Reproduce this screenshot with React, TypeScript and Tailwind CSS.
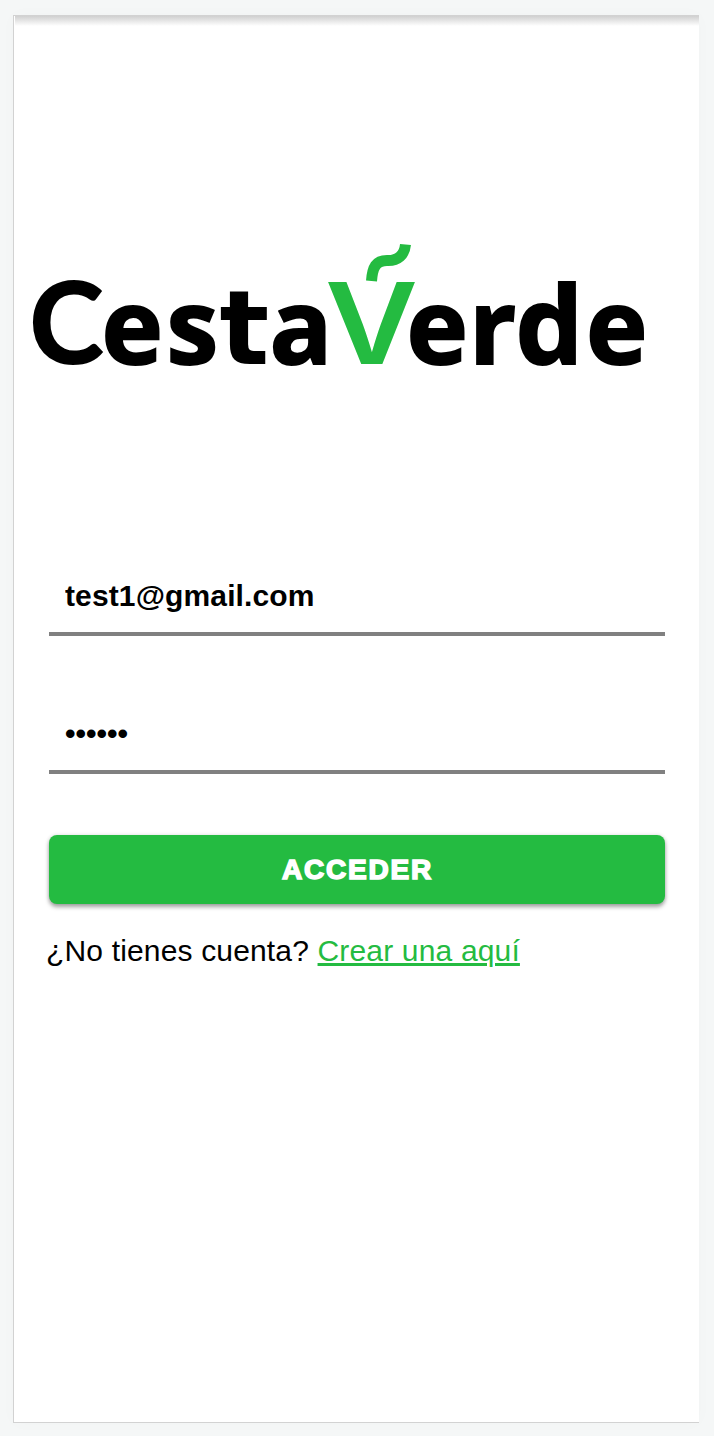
function Logo() {
  return (
    <svg className="block h-[200px] w-[640px]" viewBox="20 205 640 200" role="img" aria-label="CestaVerde">
      <text
        y="364"
        className="fill-black font-['Open_Sans',sans-serif] text-[104px] font-bold"
        x="29 101.500 166.500 219.500 269.500"
      >
        <tspan className="font-['Lato',sans-serif] text-[114px] font-black">C</tspan>
        <tspan className="stroke-black stroke-[2px]">es</tspan>
        <tspan className="font-['DejaVu_Sans',sans-serif] text-[104px]">t</tspan>
        <tspan className="stroke-black stroke-[2px]">a</tspan>
      </text>
      <text
        y="364"
        x="325"
        textLength="93"
        lengthAdjust="spacingAndGlyphs"
        className="fill-[#24bb41] font-['Inter',sans-serif] text-[113px] font-semibold"
      >
        V
      </text>
      <text
        y="364"
        className="fill-black stroke-black stroke-[2px] font-['Open_Sans',sans-serif] text-[104px] font-bold"
        x="406.500 469 515.500 586"
      >
        er<tspan className="text-[107px]">d</tspan>e
      </text>
      <path
        d="M371.500 281C372.500 267 376 260.500 387 260.500C398 261 404.500 255 405.500 244.500"
        fill="none"
        stroke="#24bb41"
        strokeWidth="11"
      />
    </svg>
  );
}

export default function App() {
  return (
    <div className="h-[1436px] w-[714px] bg-[#f5f7f7] pt-[15px] pl-[13px] font-['Liberation_Sans',Arial,sans-serif] text-black">
      <main className="flex h-[1408px] w-[686px] flex-col border-t border-b border-l border-[#d2d2d2] bg-white shadow-[0_0_16px_rgba(0,0,0,0.02)]">
        <div className="ml-px h-[10px] shrink-0 bg-linear-to-b from-[#d0d0d0] to-white" />
        <div className="mt-[179px] ml-[6px] shrink-0">
          <Logo />
        </div>
        <form className="mt-[152px] ml-[35px] flex w-[616px] flex-col">
          <input
            type="text"
            aria-label="Email"
            defaultValue="test1@gmail.com"
            className="h-[79px] border-b-4 border-[#808080] px-4 pt-[2px] text-[30px] font-bold tracking-[0.130px] outline-none"
          />
          <input
            type="password"
            aria-label="Password"
            defaultValue="123456"
            className="mt-[59px] h-[79px] border-b-4 border-[#808080] px-4 pt-[2px] text-[30px] font-bold outline-none"
          />
          <button
            type="button"
            className="mt-[61px] h-[69px] rounded-lg bg-[#24bb41] pt-px pl-px text-[28px] font-bold tracking-[1.800px] text-white shadow-[0_3px_4px_rgba(0,0,0,0.35),0_0_4px_rgba(0,0,0,0.12)] [-webkit-text-stroke:1.600px_white]"
          >
            ACCEDER
          </button>
          <p className="mt-[29px] -ml-[3px] text-[30px] leading-[36px] tracking-[0.160px] whitespace-nowrap">
            ¿No tienes cuenta?{" "}
            <a className="text-[#24bb41] underline" href="#crear">
              Crear una aquí
            </a>
          </p>
        </form>
      </main>
    </div>
  );
}
